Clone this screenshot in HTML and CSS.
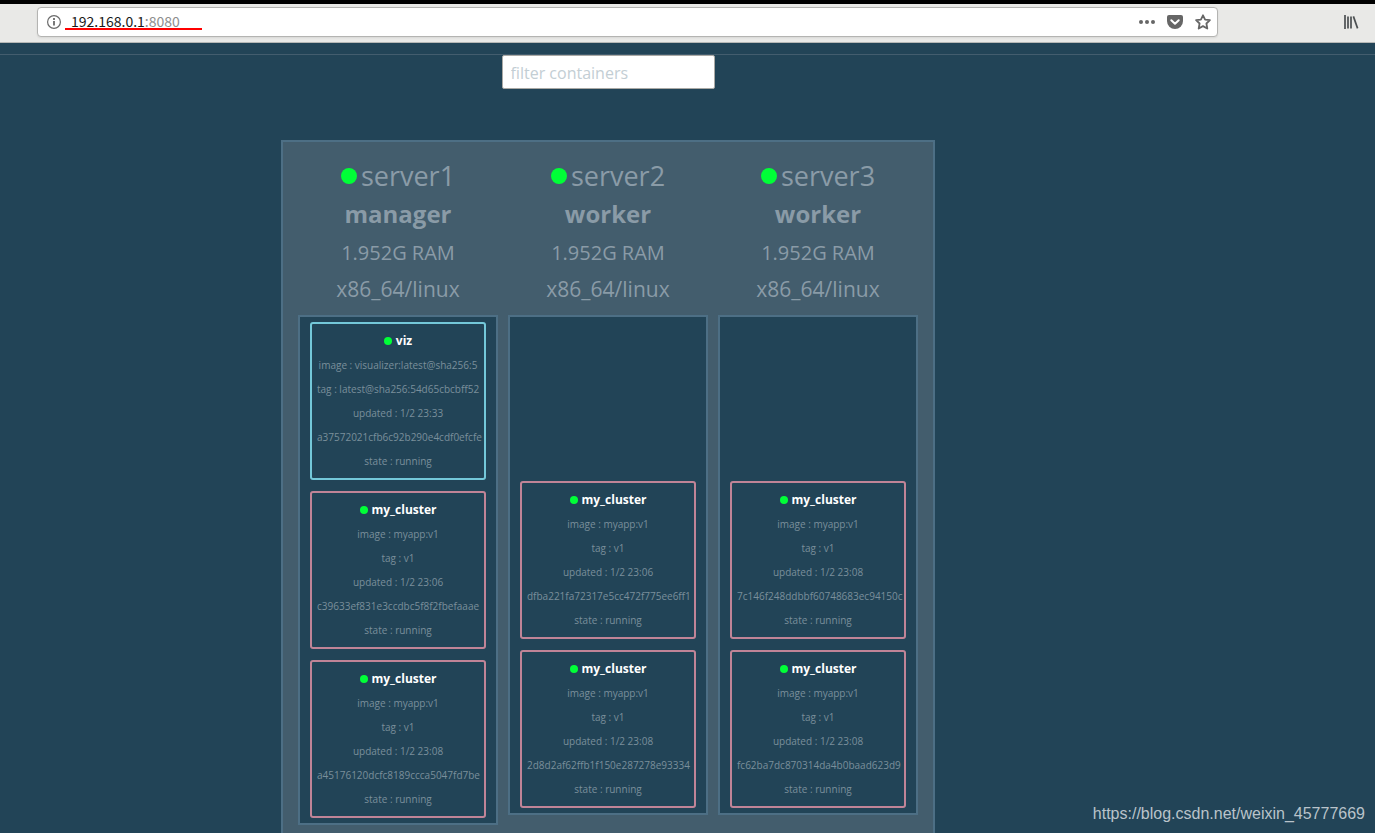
FILE: index.html
```html
<!DOCTYPE html>
<html lang="en">
<head>
<meta charset="utf-8">
<title>Visualizer</title>
<link rel="stylesheet" href="styles.css">
</head>
<body>
<header class="toolbar">
  <div class="urlbar">
    <svg class="icon" width="16" height="16" viewBox="0 0 16 16" fill="none" stroke="#6b6b6b"><circle cx="8" cy="8" r="6.4" stroke-width="1.2"/><path d="M8 7v4.5M8 4v2" stroke-width="1.8"/></svg>
    <div class="address" role="textbox" aria-label="Address">192.168.0.1<span class="port">:8080</span></div>
    <div class="actions">
      <button class="tool" aria-label="Page actions"><svg width="16" height="16" viewBox="0 0 16 16" fill="#666"><circle cx="2" cy="8" r="2"/><circle cx="8" cy="8" r="2"/><circle cx="14" cy="8" r="2"/></svg></button>
      <button class="tool" aria-label="Save to Pocket"><svg width="16" height="16" viewBox="0 0 16 16"><path d="M2 1h12a2 2 0 0 1 2 2v4a8 8 0 0 1-16 0V3a2 2 0 0 1 2-2z" fill="#666"/><path d="M4.3 6.2L8 9.7l3.7-3.5" fill="none" stroke="#fff" stroke-width="2" stroke-linecap="round" stroke-linejoin="round"/></svg></button>
      <button class="tool" aria-label="Bookmark this page"><svg width="16" height="16" viewBox="0 0 16 16" fill="none" stroke="#666" stroke-width="1.8" stroke-linejoin="round"><path d="M8 1.3l2.1 4.3 4.8.6-3.5 3.3.9 5L8 12.1l-4.3 2.4.9-5L1.1 6.2l4.8-.6z"/></svg></button>
    </div>
  </div>
  <button class="tool" aria-label="Library"><svg width="16" height="16" viewBox="0 0 16 16" fill="none" stroke="#4c5052" stroke-width="1.7"><path d="M2 1v14M5 2.5v12M8 2.5v12"/><path d="M10.4 2.4l4.2 12"/></svg></button>
</header>
<main class="page">
  <input class="filter" type="text" placeholder="filter containers" aria-label="filter containers">
  <section class="cluster">
    <article class="node">
      <h2 class="host"><i class="dot"></i>server1</h2>
      <p class="role">manager</p>
      <p class="memory">1.952G RAM</p>
      <p class="platform">x86_64/linux</p>
      <div class="tasks">
        <div class="task viz">
          <h3 class="name"><i class="dot"></i>viz</h3>
          <p>image : visualizer:latest@sha256:5</p>
          <p>tag : latest@sha256:54d65cbcbff52</p>
          <p>updated : 1/2 23:33</p>
          <p>a37572021cfb6c92b290e4cdf0efcfe</p>
          <p>state : running</p>
        </div>
        <div class="task">
          <h3 class="name"><i class="dot"></i>my_cluster</h3>
          <p>image : myapp:v1</p>
          <p>tag : v1</p>
          <p>updated : 1/2 23:06</p>
          <p>c39633ef831e3ccdbc5f8f2fbefaaae</p>
          <p>state : running</p>
        </div>
        <div class="task">
          <h3 class="name"><i class="dot"></i>my_cluster</h3>
          <p>image : myapp:v1</p>
          <p>tag : v1</p>
          <p>updated : 1/2 23:08</p>
          <p>a45176120dcfc8189ccca5047fd7be</p>
          <p>state : running</p>
        </div>
      </div>
    </article>
    <article class="node">
      <h2 class="host"><i class="dot"></i>server2</h2>
      <p class="role">worker</p>
      <p class="memory">1.952G RAM</p>
      <p class="platform">x86_64/linux</p>
      <div class="tasks">
        <div class="task">
          <h3 class="name"><i class="dot"></i>my_cluster</h3>
          <p>image : myapp:v1</p>
          <p>tag : v1</p>
          <p>updated : 1/2 23:06</p>
          <p>dfba221fa72317e5cc472f775ee6ff1</p>
          <p>state : running</p>
        </div>
        <div class="task">
          <h3 class="name"><i class="dot"></i>my_cluster</h3>
          <p>image : myapp:v1</p>
          <p>tag : v1</p>
          <p>updated : 1/2 23:08</p>
          <p>2d8d2af62ffb1f150e287278e93334</p>
          <p>state : running</p>
        </div>
      </div>
    </article>
    <article class="node">
      <h2 class="host"><i class="dot"></i>server3</h2>
      <p class="role">worker</p>
      <p class="memory">1.952G RAM</p>
      <p class="platform">x86_64/linux</p>
      <div class="tasks">
        <div class="task">
          <h3 class="name"><i class="dot"></i>my_cluster</h3>
          <p>image : myapp:v1</p>
          <p>tag : v1</p>
          <p>updated : 1/2 23:08</p>
          <p>7c146f248ddbbf60748683ec94150c</p>
          <p>state : running</p>
        </div>
        <div class="task">
          <h3 class="name"><i class="dot"></i>my_cluster</h3>
          <p>image : myapp:v1</p>
          <p>tag : v1</p>
          <p>updated : 1/2 23:08</p>
          <p>fc62ba7dc870314da4b0baad623d9</p>
          <p>state : running</p>
        </div>
      </div>
    </article>
  </section>
</main>
<div class="watermark">https://blog.csdn.net/weixin_45777669</div>
</body>
</html>
```
FILE: styles.css
```css
* { box-sizing: border-box; }
body {
  margin: 0;
  height: 100vh;
  overflow: hidden;
  display: flex;
  flex-direction: column;
  background: #224457;
  color: #8a9ba7;
  font-family: "Open Sans", sans-serif;
}
h2, h3, p { margin: 0; font-weight: 400; }

.toolbar {
  flex: none;
  display: flex;
  align-items: center;
  justify-content: space-between;
  padding: 3px 24px 5px 37px;
  border-top: 4px solid #000;
  border-bottom: 1px solid #b6b8b6;
  background: #e9e9e7;
}
.urlbar {
  flex: 1;
  display: flex;
  align-items: center;
  height: 30px;
  margin-right: 125px;
  padding: 0 6px 0 8px;
  border: 1px solid #b4b4b2;
  border-radius: 4px;
  background: #fff;
  box-shadow: 0 1px 2px #00000014;
}
.address {
  width: 137px;
  height: 16px;
  margin-left: 3px;
  padding-left: 6px;
  border-bottom: 2px solid #f00;
  color: #1a1a1a;
  font: 14px/14px "Noto Sans CJK SC", sans-serif;
}
.port { color: #8e8e8e; }
.actions { display: flex; gap: 12px; margin-left: auto; }
.tool { display: flex; padding: 0; border: 0; background: none; }
.toolbar > .tool { margin-right: -8px; }

.page {
  flex: 1;
  min-height: 0;
  display: flex;
  flex-direction: column;
  align-items: center;
  margin-top: 11px;
  padding-right: 159px;
  border-top: 1px solid #435d6e;
}
.filter {
  flex: none;
  width: 213px;
  height: 34px;
  padding: 2px 8px 0;
  border: 1px solid #aaa9a5;
  border-radius: 2px;
  background: #fff;
  font: 16px/24px "Open Sans", sans-serif;
}
.filter::placeholder { color: #c3ced4; opacity: 1; }

.cluster {
  flex: none;
  display: flex;
  align-items: flex-start;
  gap: 10px;
  min-height: 720px;
  margin-top: 51px;
  padding: 16px 15px;
  border: 2px solid #4d6f85;
  background: #435d6d;
}
.node { width: 200px; text-align: center; }
.host, .name { display: flex; align-items: center; justify-content: center; gap: 4px; }
.dot { width: 8px; height: 8px; border-radius: 50%; background: #00ff37; }
.host { font-size: 27px; line-height: 36px; }
.host .dot { width: 16px; height: 16px; }
.role { font-size: 24px; line-height: 40px; font-weight: 700; }
.memory { font-size: 20px; line-height: 38px; }
.platform { font-size: 21px; line-height: 34px; }
.tasks {
  display: flex;
  flex-direction: column;
  justify-content: flex-end;
  gap: 11px;
  min-height: 500px;
  margin-top: 9px;
  padding: 5px 10px;
  border: 2px solid #4d6f85;
  background: #224457;
}
.task {
  overflow: hidden;
  padding: 7px;
  border-radius: 3px;
  box-shadow: inset 0 0 0 2px #c08497;
  color: #7a8f9b;
  font-size: 10px;
  line-height: 24px;
  white-space: nowrap;
}
.viz { box-shadow: inset 0 0 0 2px #74c8d9; }
.name { color: #fff; font-size: 12px; line-height: 24px; font-weight: 700; }

.watermark {
  position: absolute;
  right: 10px;
  bottom: 8px;
  color: #b9c3ca;
  font: 16px/22px "Liberation Sans", sans-serif;
}
```
